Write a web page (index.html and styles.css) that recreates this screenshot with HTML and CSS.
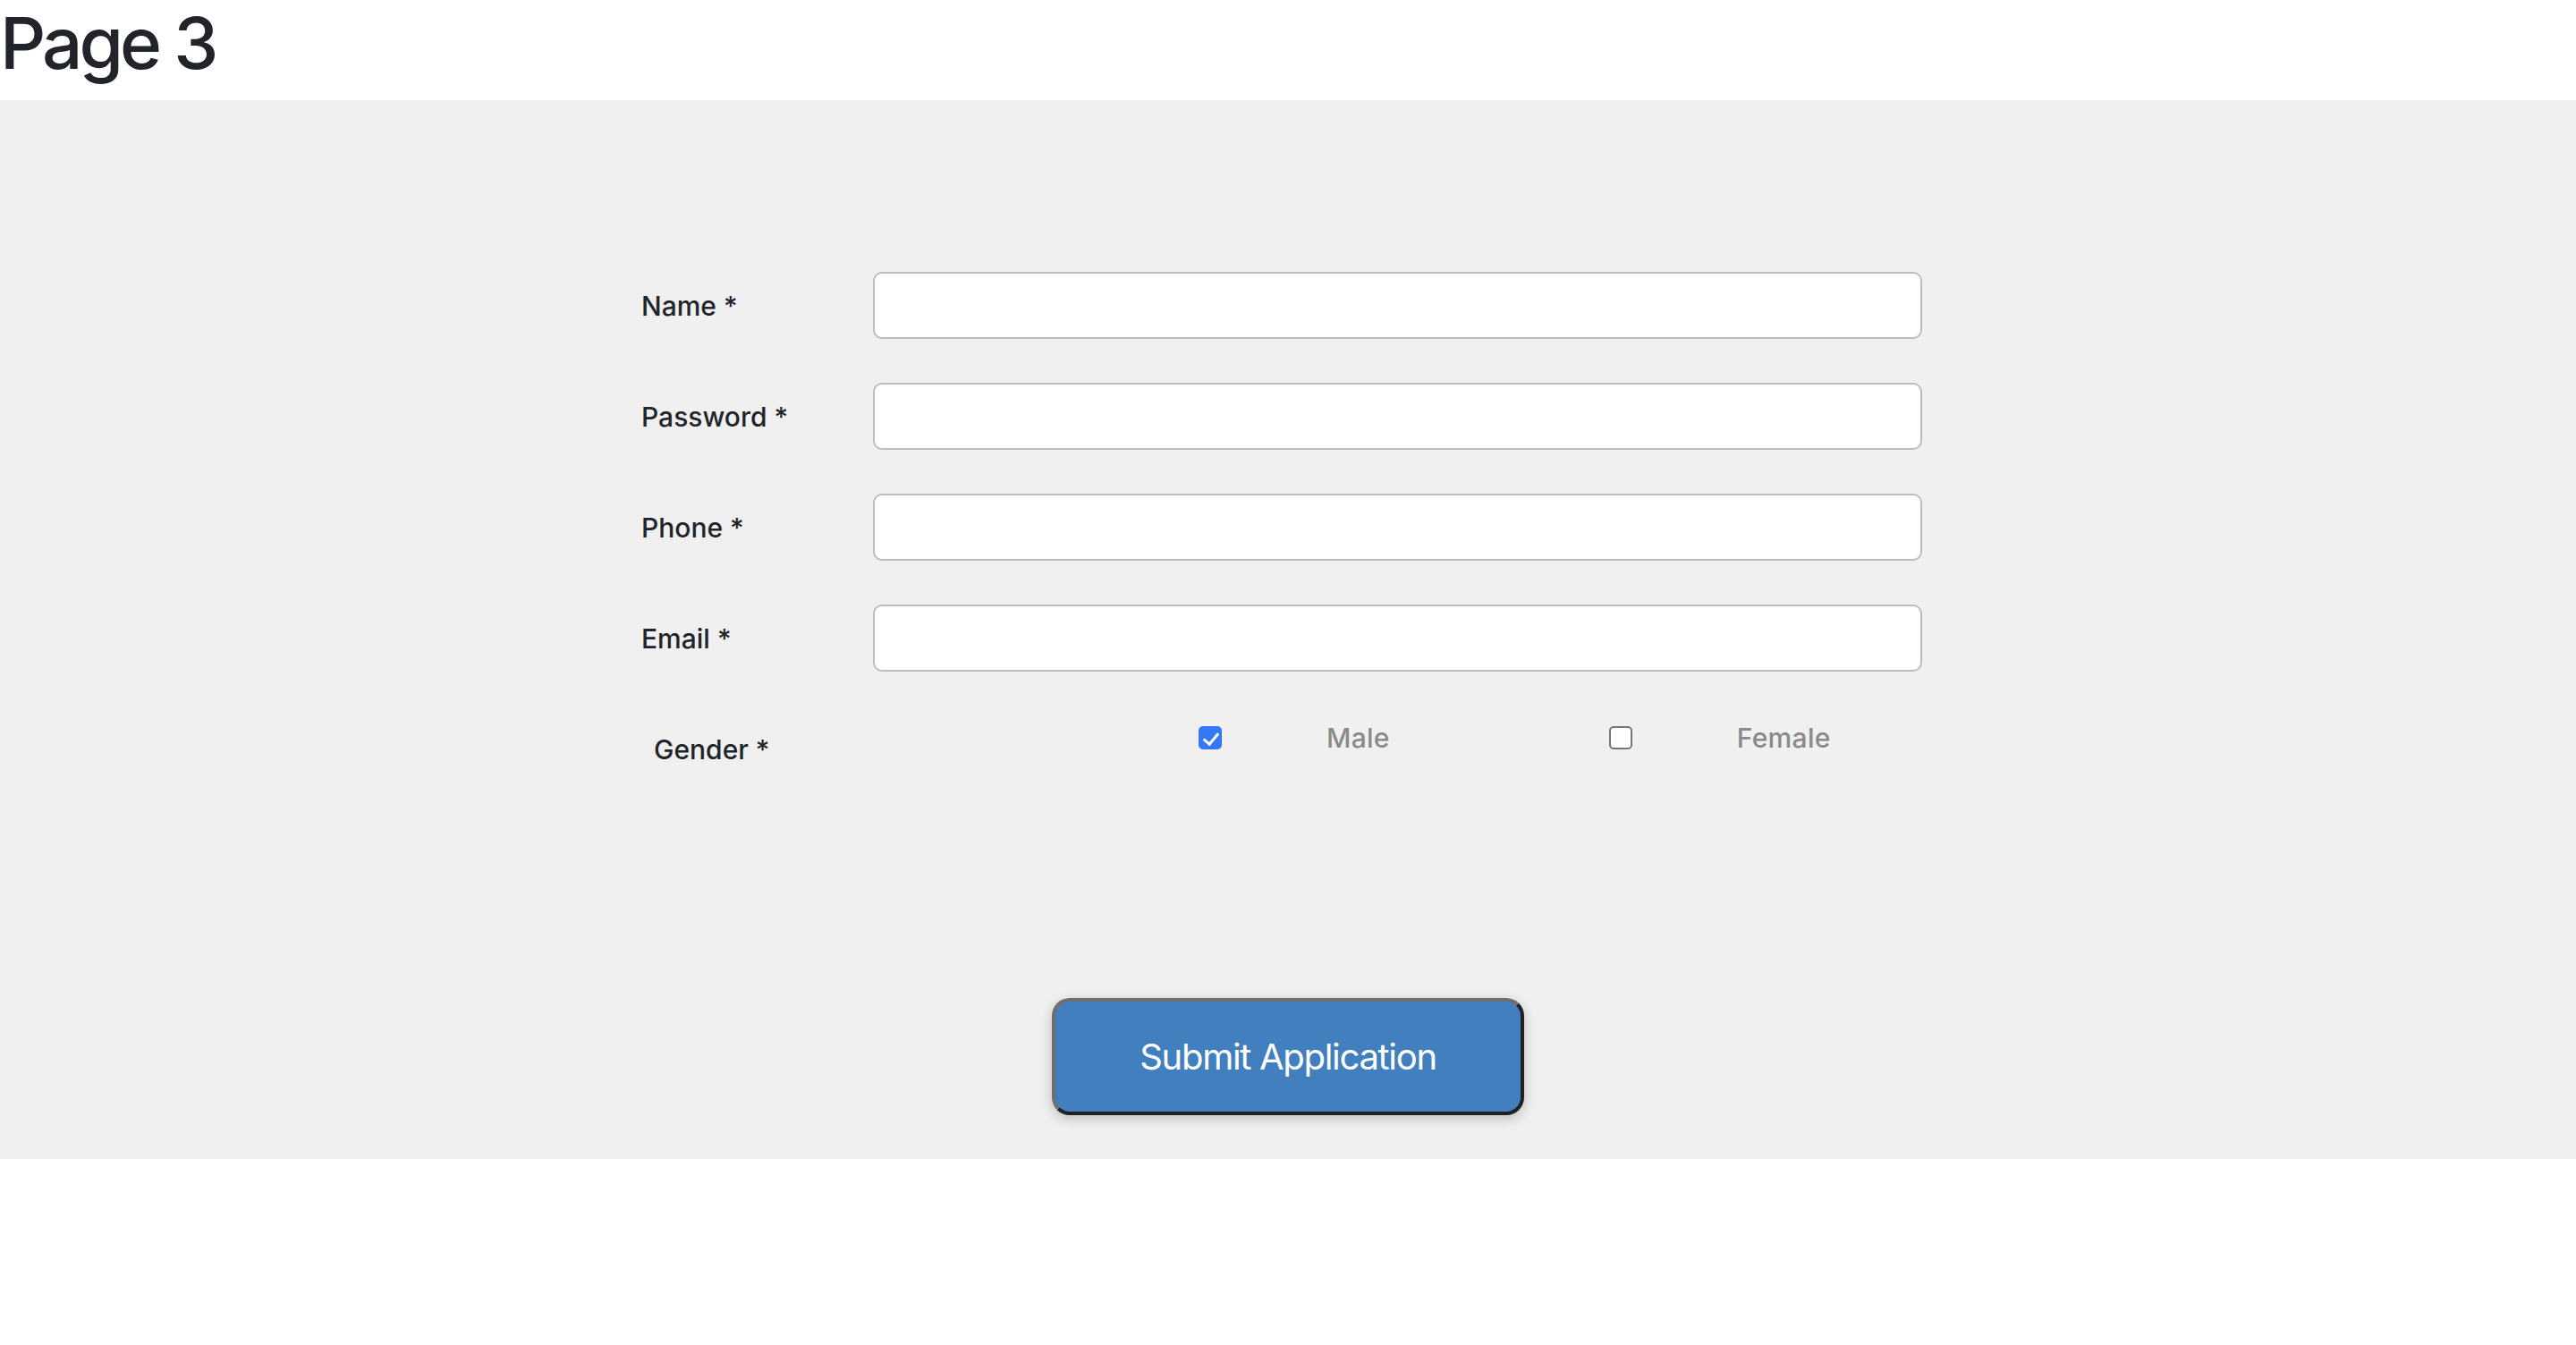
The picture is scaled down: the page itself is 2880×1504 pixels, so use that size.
FILE: index.html
```html
<!DOCTYPE html>
<html lang="en">
<head>
<meta charset="utf-8">
<title>Page 3</title>
<link rel="stylesheet" href="styles.css">
</head>
<body>
<h1 class="title">Page 3</h1>
<section class="panel">
  <form class="form">
    <div class="row">
      <label class="label" for="name">Name *</label>
      <input class="field" id="name" type="text">
    </div>
    <div class="row">
      <label class="label" for="password">Password *</label>
      <input class="field" id="password" type="password">
    </div>
    <div class="row">
      <label class="label" for="phone">Phone *</label>
      <input class="field" id="phone" type="tel">
    </div>
    <div class="row">
      <label class="label" for="email">Email *</label>
      <input class="field" id="email" type="email">
    </div>
    <div class="row gender">
      <span class="label label-gender">Gender *</span>
      <div class="options">
        <label class="option option-male"><input class="check" type="checkbox" checked><span class="option-text">Male</span></label>
        <label class="option option-female"><input class="check" type="checkbox"><span class="option-text">Female</span></label>
      </div>
    </div>
    <div class="actions">
      <button class="submit" type="button">Submit Application</button>
    </div>
  </form>
</section>
</body>
</html>
```
FILE: styles.css
```css
* { box-sizing: border-box; }

body {
  margin: 0;
  font-family: Inter, "Noto Sans", "Liberation Sans", sans-serif;
  color: #212529;
  background: #ffffff;
}

.title {
  margin: 0 0 16px 0;
  padding-left: 0;
  font-size: 80px;
  line-height: 96px;
  font-weight: 500;
  color: #212529;
  letter-spacing: -4px;
}

.panel {
  background: #f0f0f0;
  height: 1184px;
  padding-top: 192px;
}

.form {
  width: 1446px;
  margin: 0 auto;
  display: flex;
  flex-direction: column;
  gap: 49px;
}

.row {
  display: grid;
  grid-template-columns: 259px 1173px;
  height: 75px;
  align-items: center;
}

.label {
  font-size: 30px;
  font-weight: 500;
  color: #212529;
}

.label-gender {
  padding-left: 14px;
}

.field {
  height: 75px;
  width: 1173px;
  border: 2px solid #bdbdbd;
  border-radius: 10px;
  background: #ffffff;
  font-size: 30px;
  padding: 0 16px;
  outline: none;
}

.options {
  align-self: start;
  padding-top: 12px;
  display: flex;
  align-items: center;
  padding-left: 364px;
}

.option {
  display: flex;
  align-items: center;
  height: 26px;
}

.option-female {
  margin-left: 245px;
}

.option-text {
  margin-left: 117px;
  font-size: 30px;
  font-weight: 500;
  color: #8a8a8a;
  letter-spacing: 0.3px;
}

.check {
  appearance: none;
  -webkit-appearance: none;
  margin: 0;
  width: 26px;
  height: 26px;
  border: 2px solid #767676;
  border-radius: 5px;
  background: #ffffff;
  position: relative;
}

.check:checked {
  background: #3478f6;
  border-color: #3478f6;
}

.check:checked::after {
  content: "";
  position: absolute;
  left: 7px;
  top: 2px;
  width: 7px;
  height: 14px;
  border-right: 3px solid #ffffff;
  border-bottom: 3px solid #ffffff;
  transform: rotate(40deg);
}

.actions {
  display: flex;
  justify-content: center;
  margin-top: 192px;
}

.submit {
  width: 528px;
  height: 131px;
  background: #427fbf;
  color: #ffffff;
  font-family: Inter, "Noto Sans", "Liberation Sans", sans-serif;
  font-size: 40px;
  font-weight: 400;
  border-style: solid;
  border-width: 4px;
  border-color: #6f6f6f #222222 #222222 #6f6f6f;
  border-radius: 20px;
  box-shadow: 0 4px 14px rgba(0, 0, 0, 0.22);
  letter-spacing: -1.3px;
}
```
